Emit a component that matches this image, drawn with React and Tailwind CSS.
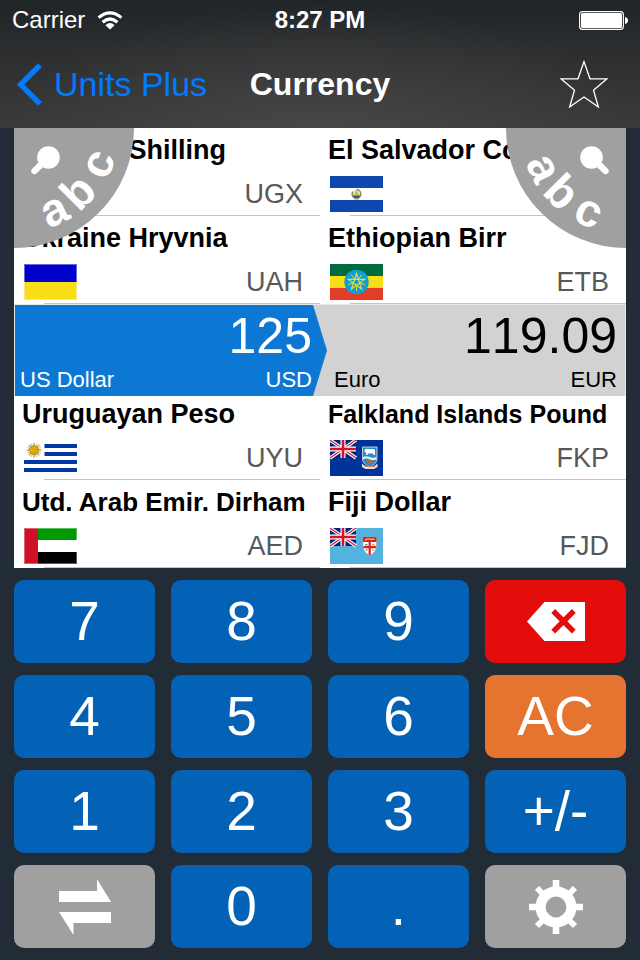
import { useState } from 'react';
import clsx from 'clsx';

const RATE = 0.95272;

/* ---------- Flags (53 x 36) ---------- */

function FlagFrame({ label, children }) {
  return (
    <svg viewBox="0 0 53 36" className="h-9 w-[53px]" role="img" aria-label={label}>
      {children}
    </svg>
  );
}

function UnionJack() {
  return (
    <g>
      <rect width="26" height="18" fill="#00247d" />
      <path d="M0 0L26 18M26 0L0 18" stroke="#fff" strokeWidth="3.4" />
      <path d="M0 0L26 18M26 0L0 18" stroke="#cf142b" strokeWidth="1.1" />
      <path d="M13 0V18M0 9H26" stroke="#fff" strokeWidth="5" />
      <path d="M13 0V18M0 9H26" stroke="#cf142b" strokeWidth="2.6" />
    </g>
  );
}

const flags = {
  UGX: (
    <FlagFrame label="Uganda">
      <rect width="53" height="36" fill="#000" />
      <rect y="6" width="53" height="6" fill="#fcdc04" />
      <rect y="12" width="53" height="6" fill="#d90000" />
      <rect y="24" width="53" height="6" fill="#fcdc04" />
      <rect y="30" width="53" height="6" fill="#d90000" />
    </FlagFrame>
  ),
  UAH: (
    <FlagFrame label="Ukraine">
      <rect width="53" height="18" fill="#0000cd" />
      <rect y="18" width="53" height="18" fill="#f9dd16" />
      <rect x="0.5" y="0.5" width="52" height="35" fill="none" stroke="#fff" strokeOpacity="0.4" />
    </FlagFrame>
  ),
  UYU: (
    <FlagFrame label="Uruguay">
      <rect width="53" height="36" fill="#fff" />
      <path d="M20.5 6H53M20.5 14H53M0 22H53M0 30H53" stroke="#0038a8" strokeWidth="4.2" />
      <g stroke="#b8963a" strokeWidth="1.3">
        <path d="M10 3V17.5M2.7 10.2H17.3M4.8 5L15.2 15.4M15.2 5L4.8 15.4" />
        <path d="M7.2 3.6L12.8 16.8M12.8 3.6L7.2 16.8M3.4 7.4L16.6 13M16.6 7.4L3.4 13" strokeWidth="0.8" />
      </g>
      <circle cx="10" cy="10.2" r="4.3" fill="#e0b50c" stroke="#9a7a1c" strokeWidth="0.8" />
      <path d="M8.2 9.4H9.4M10.8 9.4H12M8.8 12H11.4" stroke="#9a7a1c" strokeWidth="0.7" />
    </FlagFrame>
  ),
  AED: (
    <FlagFrame label="United Arab Emirates">
      <rect width="53" height="36" fill="#fff" />
      <rect width="53" height="12" fill="#009a00" />
      <rect y="24" width="53" height="12" fill="#000" />
      <rect width="14" height="36" fill="#ce1126" />
      <rect x="0.5" y="0.5" width="52" height="35" fill="none" stroke="#fff" strokeOpacity="0.35" />
    </FlagFrame>
  ),
  SVC: (
    <FlagFrame label="El Salvador">
      <rect width="53" height="36" fill="#fff" />
      <rect width="53" height="12" fill="#0f47af" />
      <rect y="24" width="53" height="12" fill="#0f47af" />
      <circle cx="26.5" cy="18" r="4.4" fill="#e8e6b8" stroke="#5f8f5c" strokeWidth="1.3" strokeDasharray="22 4" strokeDashoffset="-20" />
      <path d="M23.5 19.5L26.5 14.5L29.5 19.5Z" fill="#d6b63c" />
      <path d="M22.5 19.5H30.5L29 22H24Z" fill="#2f5aa8" />
      <path d="M24 23H29" stroke="#c9a227" strokeWidth="1" />
    </FlagFrame>
  ),
  ETB: (
    <FlagFrame label="Ethiopia">
      <rect width="53" height="12" fill="#006b3f" />
      <rect y="12" width="53" height="12" fill="#f9dd16" />
      <rect y="24" width="53" height="12" fill="#e23d28" />
      <circle cx="26.5" cy="18" r="12.2" fill="#0f9fd6" />
      <path
        d="M26.5 9.5L31.5 24.9L18.4 15.4H34.6L21.5 24.9Z"
        fill="none"
        stroke="#e6dc3c"
        strokeWidth="1.2"
      />
      <path
        d="M26.5 21.5V27M29.7 18.9L35 20.7M28.5 15.2L31.8 10.8M24.5 15.2L21.2 10.8M23.3 18.9L18 20.7"
        stroke="#e6dc3c"
        strokeWidth="0.9"
      />
    </FlagFrame>
  ),
  FKP: (
    <FlagFrame label="Falkland Islands">
      <rect width="53" height="36" fill="#003399" />
      <UnionJack />
      <path d="M32.5 7H47V19Q47 24 39.7 26.5Q32.5 24 32.5 19Z" fill="#2f86c9" stroke="#dfe9ee" strokeWidth="0.8" />
      <path d="M34.5 10Q36 8 38 9H43Q45.5 9 45 12V15H43.4V13.4H37.6V15H36V12.4L34.5 11.8Z" fill="#fff" />
      <path d="M33 17Q36.5 15.5 39.7 17T46.4 17V19.4Q43 21 39.7 19.4T33 19.4Z" fill="#e8ecd8" />
      <path d="M36 20.5H43.5L42 24H37.5Z" fill="#a86f3a" />
      <path d="M32 23.5L35 26H44.5L47.5 23.5V27L44 29H35.5L32 27Z" fill="#e9e4cf" />
      <path d="M35 26H45" stroke="#c7443a" strokeWidth="1.2" />
    </FlagFrame>
  ),
  FJD: (
    <FlagFrame label="Fiji">
      <rect width="53" height="36" fill="#53b3de" />
      <UnionJack />
      <path d="M33 9H46.5V18Q46.5 24 39.7 27.5Q33 24 33 18Z" fill="#fff" stroke="#9aa4a8" strokeWidth="0.6" />
      <path d="M33 9H46.5V14H33Z" fill="#d8202f" />
      <path d="M35 12.2Q38 10 41 11.5L44.5 11" fill="none" stroke="#f0c53a" strokeWidth="1.3" />
      <path d="M39.7 14V27M33.4 19.2H46.2" stroke="#d8202f" strokeWidth="2.2" />
      <path d="M35.2 16.7H37.6M35.8 22H37.6" stroke="#6f9a55" strokeWidth="1.5" />
      <path d="M42 16.7H44.6M42 22H43.8" stroke="#d9b23c" strokeWidth="1.5" />
    </FlagFrame>
  ),
};

const leftRows = [
  { name: 'Uganda Shilling', code: 'UGX' },
  { name: 'Ukraine Hryvnia', code: 'UAH' },
  { name: 'Uruguayan Peso', code: 'UYU' },
  { name: 'Utd. Arab Emir. Dirham', code: 'AED', size: 'text-[26px]' },
];

const rightRows = [
  { name: 'El Salvador Colon', code: 'SVC' },
  { name: 'Ethiopian Birr', code: 'ETB' },
  { name: 'Falkland Islands Pound', code: 'FKP', size: 'text-[25px]' },
  { name: 'Fiji Dollar', code: 'FJD' },
];

function CurrencyRow({ name, code, size = 'text-[27px]' }) {
  return (
    <li className="flex h-22 flex-col">
      <button type="button" className="flex flex-1 flex-col text-left">
        <span className={clsx('block w-full truncate pl-2 leading-[44px] font-bold text-black', size)}>
          {name}
        </span>
        <span className="flex w-full flex-1 items-center justify-between pr-[17px] pl-[10px]">
          {flags[code]}
          <span className="text-[27px] leading-9 text-[#585858]">{code}</span>
        </span>
      </button>
      <div className="ml-[30px] h-px bg-[#c4c4c6]" />
    </li>
  );
}

function CurrencyColumns({ left, right }) {
  return (
    <div className="grid grid-cols-2">
      <ul>
        {left.map((row) => (
          <CurrencyRow key={row.code} {...row} />
        ))}
      </ul>
      <ul>
        {right.map((row) => (
          <CurrencyRow key={row.code} {...row} />
        ))}
      </ul>
    </div>
  );
}

/* Quarter-circle search buttons in the corners of the picker */
function SearchCorner({ side }) {
  const isLeft = side === 'left';
  const letters = isLeft
    ? [['a', -26], ['b', -45], ['c', -67]]
    : [['a', 64], ['b', 45], ['c', 24]];

  return (
    <button
      type="button"
      aria-label={isLeft ? 'Search from currency' : 'Search to currency'}
      className={clsx('absolute top-0 z-20', isLeft ? 'left-0' : 'right-0')}
    >
      <svg viewBox={isLeft ? '0 0 120 120' : '-120 0 120 120'} className="size-[120px]">
        <circle r="120" fill="#a0a0a0" />
        <g transform={isLeft ? undefined : 'scale(-1 1)'}>
          <circle cx="34.5" cy="29.5" r="11.3" fill="#fff" />
          <path d="M29 35L24 40" stroke="#fff" strokeWidth="5" />
          <path d="M26 37.5L20.5 43" stroke="#fff" strokeWidth="6.4" strokeLinecap="round" />
        </g>
        {letters.map(([letter, angle]) => (
          <text
            key={letter}
            transform={`rotate(${angle})`}
            y="106"
            textAnchor="middle"
            fill="#fff"
            fontSize="46"
            fontWeight="700"
          >
            {letter}
          </text>
        ))}
      </svg>
    </button>
  );
}

/* ---------- Icons ---------- */

function WifiIcon() {
  return (
    <svg viewBox="0 0 26 19" className="h-[19px] w-[26px]" fill="none" stroke="#fff" aria-hidden="true">
      <path d="M1.6 6.6Q13 -3 24.4 6.6" strokeWidth="3.2" />
      <path d="M5.6 11.2Q13 4.8 20.4 11.2" strokeWidth="3.2" />
      <path d="M13 18.6L8.4 14.2Q13 9.8 17.6 14.2Z" fill="#fff" stroke="none" />
    </svg>
  );
}

function BatteryIcon() {
  return (
    <svg viewBox="0 0 49 19" className="h-[19px] w-[49px]" aria-hidden="true">
      <rect x="0.6" y="0.6" width="43.8" height="17.8" rx="3" fill="none" stroke="#fff" strokeWidth="1.1" />
      <rect x="2" y="2" width="41" height="15" rx="1.6" fill="#fff" />
      <path d="M46 6Q49 6.6 49 9.5T46 13Z" fill="#fff" />
    </svg>
  );
}

function BackspaceIcon() {
  return (
    <svg viewBox="0 0 58 39" className="h-[39px] w-[58px]" aria-hidden="true">
      <path d="M0 19.5L17.5 0H58V39H17.5Z" fill="#fff" />
      <path d="M26.2 9L46.8 29.6M46.8 9L26.2 29.6" stroke="#e50d0b" strokeWidth="5.4" />
    </svg>
  );
}

function SwapIcon() {
  return (
    <svg viewBox="0 0 52 56" className="h-14 w-[52px]" fill="#fff" aria-hidden="true">
      <path d="M0 12H38V0L52 23H0Z" />
      <path d="M52 33H0L14.5 56V44H52Z" />
    </svg>
  );
}

function GearIcon() {
  return (
    <svg viewBox="-27 -27 54 54" className="size-[54px]" fill="none" stroke="#fff" aria-hidden="true">
      <circle r="15.4" strokeWidth="10" />
      <path d="M0 -27V-17M0 17V27M-27 0H-17M17 0H27" strokeWidth="6.6" />
      <path d="M-19 -19L-12 -12M19 -19L12 -12M-19 19L-12 12M19 19L12 12" strokeWidth="5.8" />
    </svg>
  );
}

const keys = [
  { id: '7' },
  { id: '8' },
  { id: '9' },
  { id: 'del', label: 'Delete', icon: BackspaceIcon, color: 'bg-[#e50d0b]' },
  { id: '4' },
  { id: '5' },
  { id: '6' },
  { id: 'AC', color: 'bg-[#e57430]' },
  { id: '1' },
  { id: '2' },
  { id: '3' },
  { id: '+/-' },
  { id: 'swap', label: 'Swap currencies', icon: SwapIcon, color: 'bg-[#a0a0a0]' },
  { id: '0' },
  { id: '.' },
  { id: 'settings', label: 'Settings', icon: GearIcon, color: 'bg-[#a0a0a0]' },
];

function Header() {
  return (
    <header className="bg-[radial-gradient(ellipse_at_50%_100%,rgba(90,86,88,0.45),transparent_70%),linear-gradient(#1f2427,#2c2e2f_40%,#3a3a3a)] text-white">
      <div className="grid h-10 grid-cols-3 items-center px-3 text-2xl">
        <div className="flex items-center gap-3">
          <span>Carrier</span>
          <WifiIcon />
        </div>
        <span className="text-center font-bold">8:27 PM</span>
        <div className="flex justify-end">
          <BatteryIcon />
        </div>
      </div>

      <div className="grid h-22 grid-cols-[1fr_auto_1fr] items-center px-4">
        <button type="button" className="flex items-center gap-3 text-[34px] text-[#007aff]">
          <svg viewBox="0 0 26 43" className="h-[43px] w-[26px]" fill="currentColor" aria-hidden="true">
            <path d="M0.8 21.5L22 0.2L26 4L8.4 21.5L26 39L22 42.8Z" />
          </svg>
          Units Plus
        </button>
        <h1 className="text-[32px] font-bold">Currency</h1>
        <button type="button" aria-label="Favorite" className="mr-4 justify-self-end">
          <svg viewBox="0 0 48 48" className="size-12" fill="none" stroke="#fff" strokeWidth="1.3" aria-hidden="true">
            <path d="M24 1.6L30 18.8H47L33.5 30.2L38.4 47L24 37L9.6 47L14.5 30.2L1 18.8H18Z" />
          </svg>
        </button>
      </div>
    </header>
  );
}

export default function App() {
  const [value, setValue] = useState('125');
  const [swapped, setSwapped] = useState(false);

  const from = swapped ? { name: 'Euro', code: 'EUR' } : { name: 'US Dollar', code: 'USD' };
  const to = swapped ? { name: 'US Dollar', code: 'USD' } : { name: 'Euro', code: 'EUR' };
  const result = (Number(value) * (swapped ? 1 / RATE : RATE)).toFixed(2);

  const press = (id) => {
    if (id === 'settings') return;
    if (id === 'swap') setSwapped(!swapped);
    else if (id === 'AC') setValue('0');
    else if (id === 'del') setValue(value.replace(/.$/, '').replace(/^-?$/, '0'));
    else if (id === '+/-') setValue(value.startsWith('-') ? value.slice(1) : `-${value}`);
    else if (id === '.') setValue(value.includes('.') ? value : `${value}.`);
    else setValue(value === '0' ? id : value + id);
  };

  return (
    <div className="flex min-h-screen flex-col bg-[#222c36] font-['Liberation_Sans',Arial,sans-serif]">
      <Header />

      <main className="px-[14px] pb-3">
        {/* Picker */}
        <section className="relative overflow-hidden bg-white">
          <SearchCorner side="left" />
          <SearchCorner side="right" />

          <CurrencyColumns left={leftRows.slice(0, 2)} right={rightRows.slice(0, 2)} />

          {/* Selected pair */}
          <div className="relative z-10 -mb-1 h-[92px] border-x border-t border-[#e8e8e8] bg-[#d2d2d2]">
            <svg
              viewBox="0 0 314 92"
              preserveAspectRatio="none"
              className="absolute inset-y-0 left-0 h-full w-[calc(50%+8px)]"
              aria-hidden="true"
            >
              <path d="M0 0H299L313 46L299 92H0Z" fill="#0c78d3" />
            </svg>
            <div className="relative grid h-full grid-cols-2 [font-kerning:none]">
              <div className="flex flex-col pr-2 pl-[5px] text-white">
                <output className="text-right text-[50px] leading-[62px]">{value}</output>
                <div className="flex justify-between text-[22px] leading-[26px]">
                  <span>{from.name}</span>
                  <span>{from.code}</span>
                </div>
              </div>
              <div className="flex flex-col pr-2 pl-[14px] text-black">
                <output className="text-right text-[50px] leading-[62px]">{result}</output>
                <div className="flex justify-between text-[22px] leading-[26px]">
                  <span>{to.name}</span>
                  <span>{to.code}</span>
                </div>
              </div>
            </div>
          </div>

          <CurrencyColumns left={leftRows.slice(2)} right={rightRows.slice(2)} />
        </section>

        {/* Keypad */}
        <section className="grid grid-cols-4 gap-x-4 gap-y-3 pt-3">
          {keys.map(({ id, label, icon: Icon, color = 'bg-[#0362b5]' }) => (
            <button
              key={id}
              type="button"
              aria-label={label}
              onClick={() => press(id)}
              className={clsx(
                'flex h-[83px] items-center justify-center rounded-[10px] text-[55px] leading-none text-white',
                color
              )}
            >
              {Icon ? <Icon /> : id}
            </button>
          ))}
        </section>
      </main>
    </div>
  );
}
